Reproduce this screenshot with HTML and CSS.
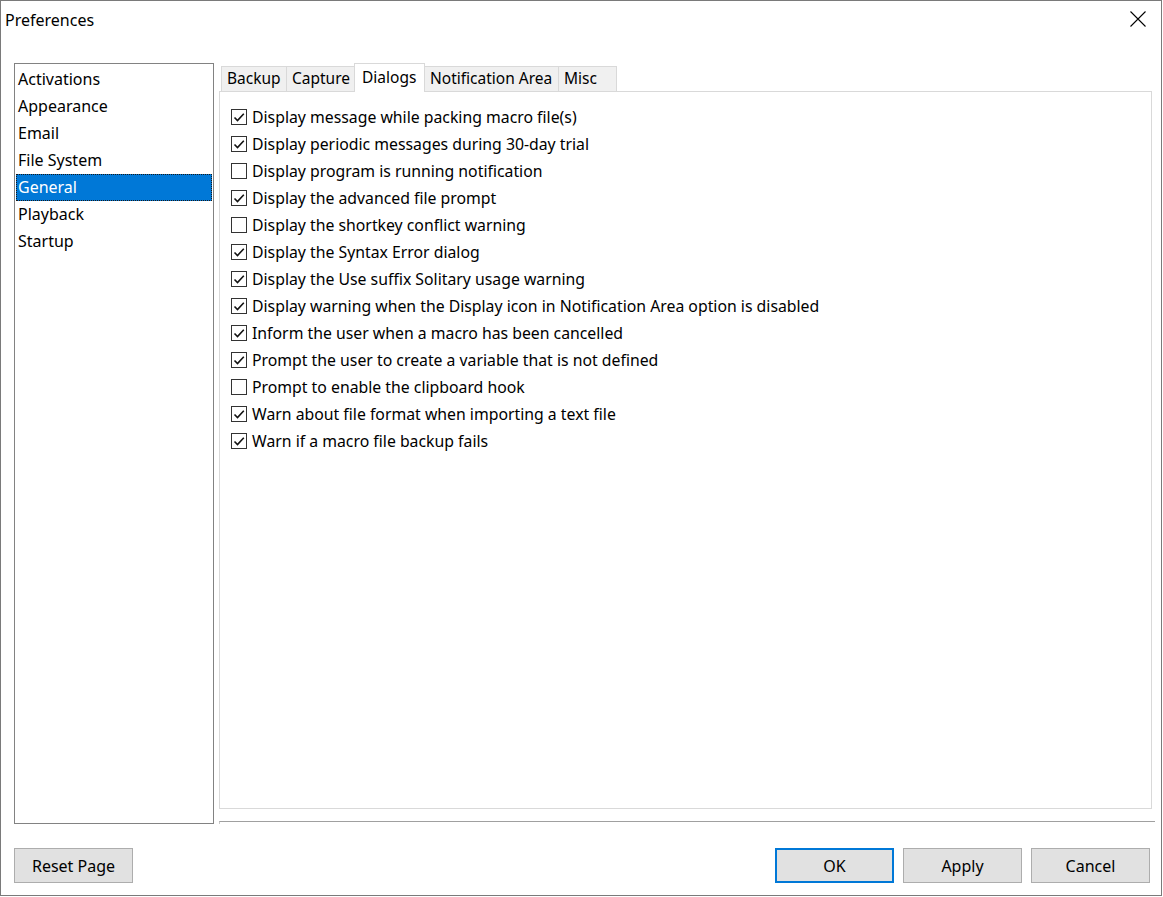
FILE: index.html
```html
<!DOCTYPE html>
<html>
<head>
<meta charset="utf-8">
<title>Preferences</title>
<link rel="stylesheet" href="styles.css">
</head>
<body>
<div class="window">
  <div class="titlebar">
    <span class="title">Preferences</span>
    <svg class="close" width="16" height="16" viewBox="0 0 16 16"><path d="M0.5 0.5 L15.5 15.5 M15.5 0.5 L0.5 15.5" stroke="#000" stroke-width="1.1" fill="none"/></svg>
  </div>
  <div class="content">
    <ul class="listbox">
      <li class="item">Activations</li>
      <li class="item">Appearance</li>
      <li class="item">Email</li>
      <li class="item">File System</li>
      <li class="item selected">General</li>
      <li class="item">Playback</li>
      <li class="item">Startup</li>
    </ul>
    <div class="tabarea">
      <div class="tabstrip">
        <div class="tab t-backup">Backup</div>
        <div class="tab t-capture">Capture</div>
        <div class="tab active t-dialogs">Dialogs</div>
        <div class="tab t-notif">Notification Area</div>
        <div class="tab t-misc">Misc</div>
      </div>
      <div class="panel">
        <label class="row"><span class="cb"><svg viewBox="0 0 14 14" width="14" height="14"><path d="M2.5 7.5 L5.5 10.5 L11.8 3.8" class="tick"/></svg></span>Display message while packing macro file(s)</label>
        <label class="row"><span class="cb"><svg viewBox="0 0 14 14" width="14" height="14"><path d="M2.5 7.5 L5.5 10.5 L11.8 3.8" class="tick"/></svg></span>Display periodic messages during 30-day trial</label>
        <label class="row"><span class="cb"></span>Display program is running notification</label>
        <label class="row"><span class="cb"><svg viewBox="0 0 14 14" width="14" height="14"><path d="M2.5 7.5 L5.5 10.5 L11.8 3.8" class="tick"/></svg></span>Display the advanced file prompt</label>
        <label class="row"><span class="cb"></span>Display the shortkey conflict warning</label>
        <label class="row"><span class="cb"><svg viewBox="0 0 14 14" width="14" height="14"><path d="M2.5 7.5 L5.5 10.5 L11.8 3.8" class="tick"/></svg></span>Display the Syntax Error dialog</label>
        <label class="row"><span class="cb"><svg viewBox="0 0 14 14" width="14" height="14"><path d="M2.5 7.5 L5.5 10.5 L11.8 3.8" class="tick"/></svg></span>Display the Use suffix Solitary usage warning</label>
        <label class="row"><span class="cb"><svg viewBox="0 0 14 14" width="14" height="14"><path d="M2.5 7.5 L5.5 10.5 L11.8 3.8" class="tick"/></svg></span>Display warning when the Display icon in Notification Area option is disabled</label>
        <label class="row"><span class="cb"><svg viewBox="0 0 14 14" width="14" height="14"><path d="M2.5 7.5 L5.5 10.5 L11.8 3.8" class="tick"/></svg></span>Inform the user when a macro has been cancelled</label>
        <label class="row"><span class="cb"><svg viewBox="0 0 14 14" width="14" height="14"><path d="M2.5 7.5 L5.5 10.5 L11.8 3.8" class="tick"/></svg></span>Prompt the user to create a variable that is not defined</label>
        <label class="row"><span class="cb"></span>Prompt to enable the clipboard hook</label>
        <label class="row"><span class="cb"><svg viewBox="0 0 14 14" width="14" height="14"><path d="M2.5 7.5 L5.5 10.5 L11.8 3.8" class="tick"/></svg></span>Warn about file format when importing a text file</label>
        <label class="row"><span class="cb"><svg viewBox="0 0 14 14" width="14" height="14"><path d="M2.5 7.5 L5.5 10.5 L11.8 3.8" class="tick"/></svg></span>Warn if a macro file backup fails</label>
      </div>
      <div class="underline"></div>
    </div>
  </div>
  <div class="buttonbar">
    <button class="btn">Reset Page</button>
    <div class="spacer"></div>
    <button class="btn default">OK</button>
    <button class="btn">Apply</button>
    <button class="btn">Cancel</button>
  </div>
</div>
</body>
</html>
```

FILE: styles.css
```css
html, body {
  margin: 0;
  padding: 0;
  background: #ffffff;
}
body {
  width: 1163px;
  height: 897px;
  font-family: "Noto Sans", "Open Sans", sans-serif;
  font-size: 16px;
  color: #000;
}
.window {
  box-sizing: border-box;
  width: 1162px;
  height: 896px;
  border: 1px solid #7a7a7a;
  display: flex;
  flex-direction: column;
  background: #fff;
}
.titlebar {
  height: 62px;
  display: flex;
  align-items: flex-start;
  justify-content: space-between;
  padding: 7px 15px 0 4px;
  box-sizing: border-box;
}
.title {
  font-size: 16px;
  line-height: 24px;
}
.close {
  margin-top: 3px;
}
.content {
  height: 761px;
  display: flex;
  padding-left: 13px;
}
.listbox {
  list-style: none;
  margin: 0;
  padding: 2px 1px 0 1px;
  width: 200px;
  box-sizing: border-box;
  border: 1px solid #828282;
  height: 761px;
}
.item {
  height: 27px;
  line-height: 26px;
  padding-left: 2px;
  box-sizing: border-box;
}
.item.selected {
  background: #0078d7;
  color: #fff;
  outline: 1px dotted #1a1a1a;
  outline-offset: -1px;
}
.tabarea {
  margin-left: 5px;
  width: 936px;
  display: flex;
  flex-direction: column;
}
.tabstrip {
  height: 28px;
  display: flex;
  align-items: flex-end;
  padding-left: 2px;
  position: relative;
  z-index: 1;
}
.tab {
  box-sizing: border-box;
  height: 25px;
  line-height: 23px;
  font-size: 15.5px;
  background: #f0f0f0;
  border: 1px solid #d9d9d9;
  border-bottom: none;
  margin-right: -1px;
  padding-left: 5px;
  white-space: nowrap;
}
.t-backup { width: 66px; }
.t-capture { width: 69px; }
.t-notif { width: 135px; }
.t-misc { width: 59px; }
.tab.active {
  height: 29px;
  margin-bottom: -1px;
  background: #fff;
  line-height: 26px;
  width: 71px;
  padding-left: 7px;
  position: relative;
}
.panel {
  box-sizing: border-box;
  width: 933px;
  height: 720px;
  border: 1px solid #d9d9d9;
  padding: 11px 0 0 11px;
  display: flex;
  flex-direction: column;
  font-size: 15.8px;
}
.row {
  height: 27px;
  display: flex;
  align-items: center;
  white-space: nowrap;
}
.cb {
  box-sizing: border-box;
  width: 16px;
  height: 16px;
  border: 1px solid #333;
  margin-right: 5px;
  flex: none;
  background: #fff;
  display: flex;
}
.cb svg {
  display: block;
}
.tick {
  fill: none;
  stroke: #111;
  stroke-width: 1.6;
}
.underline {
  margin-top: 12px;
  width: 936px;
  height: 3px;
  border-top: 1px solid #a0a0a0;
  border-left: 1px solid #c8c8c8;
  box-sizing: border-box;
}
.buttonbar {
  flex: 1;
  display: flex;
  align-items: flex-start;
  padding: 24px 11px 0 13px;
}
.spacer {
  flex: 1;
}
.btn {
  box-sizing: border-box;
  width: 119px;
  height: 35px;
  background: #e1e1e1;
  border: 1px solid #adadad;
  font-family: "Noto Sans", "Open Sans", sans-serif;
  font-size: 16px;
  color: #000;
  padding: 0;
  margin-left: 9px;
}
.btn:first-child {
  margin-left: 0;
}
.btn.default {
  border: 2px solid #0078d7;
}
```
